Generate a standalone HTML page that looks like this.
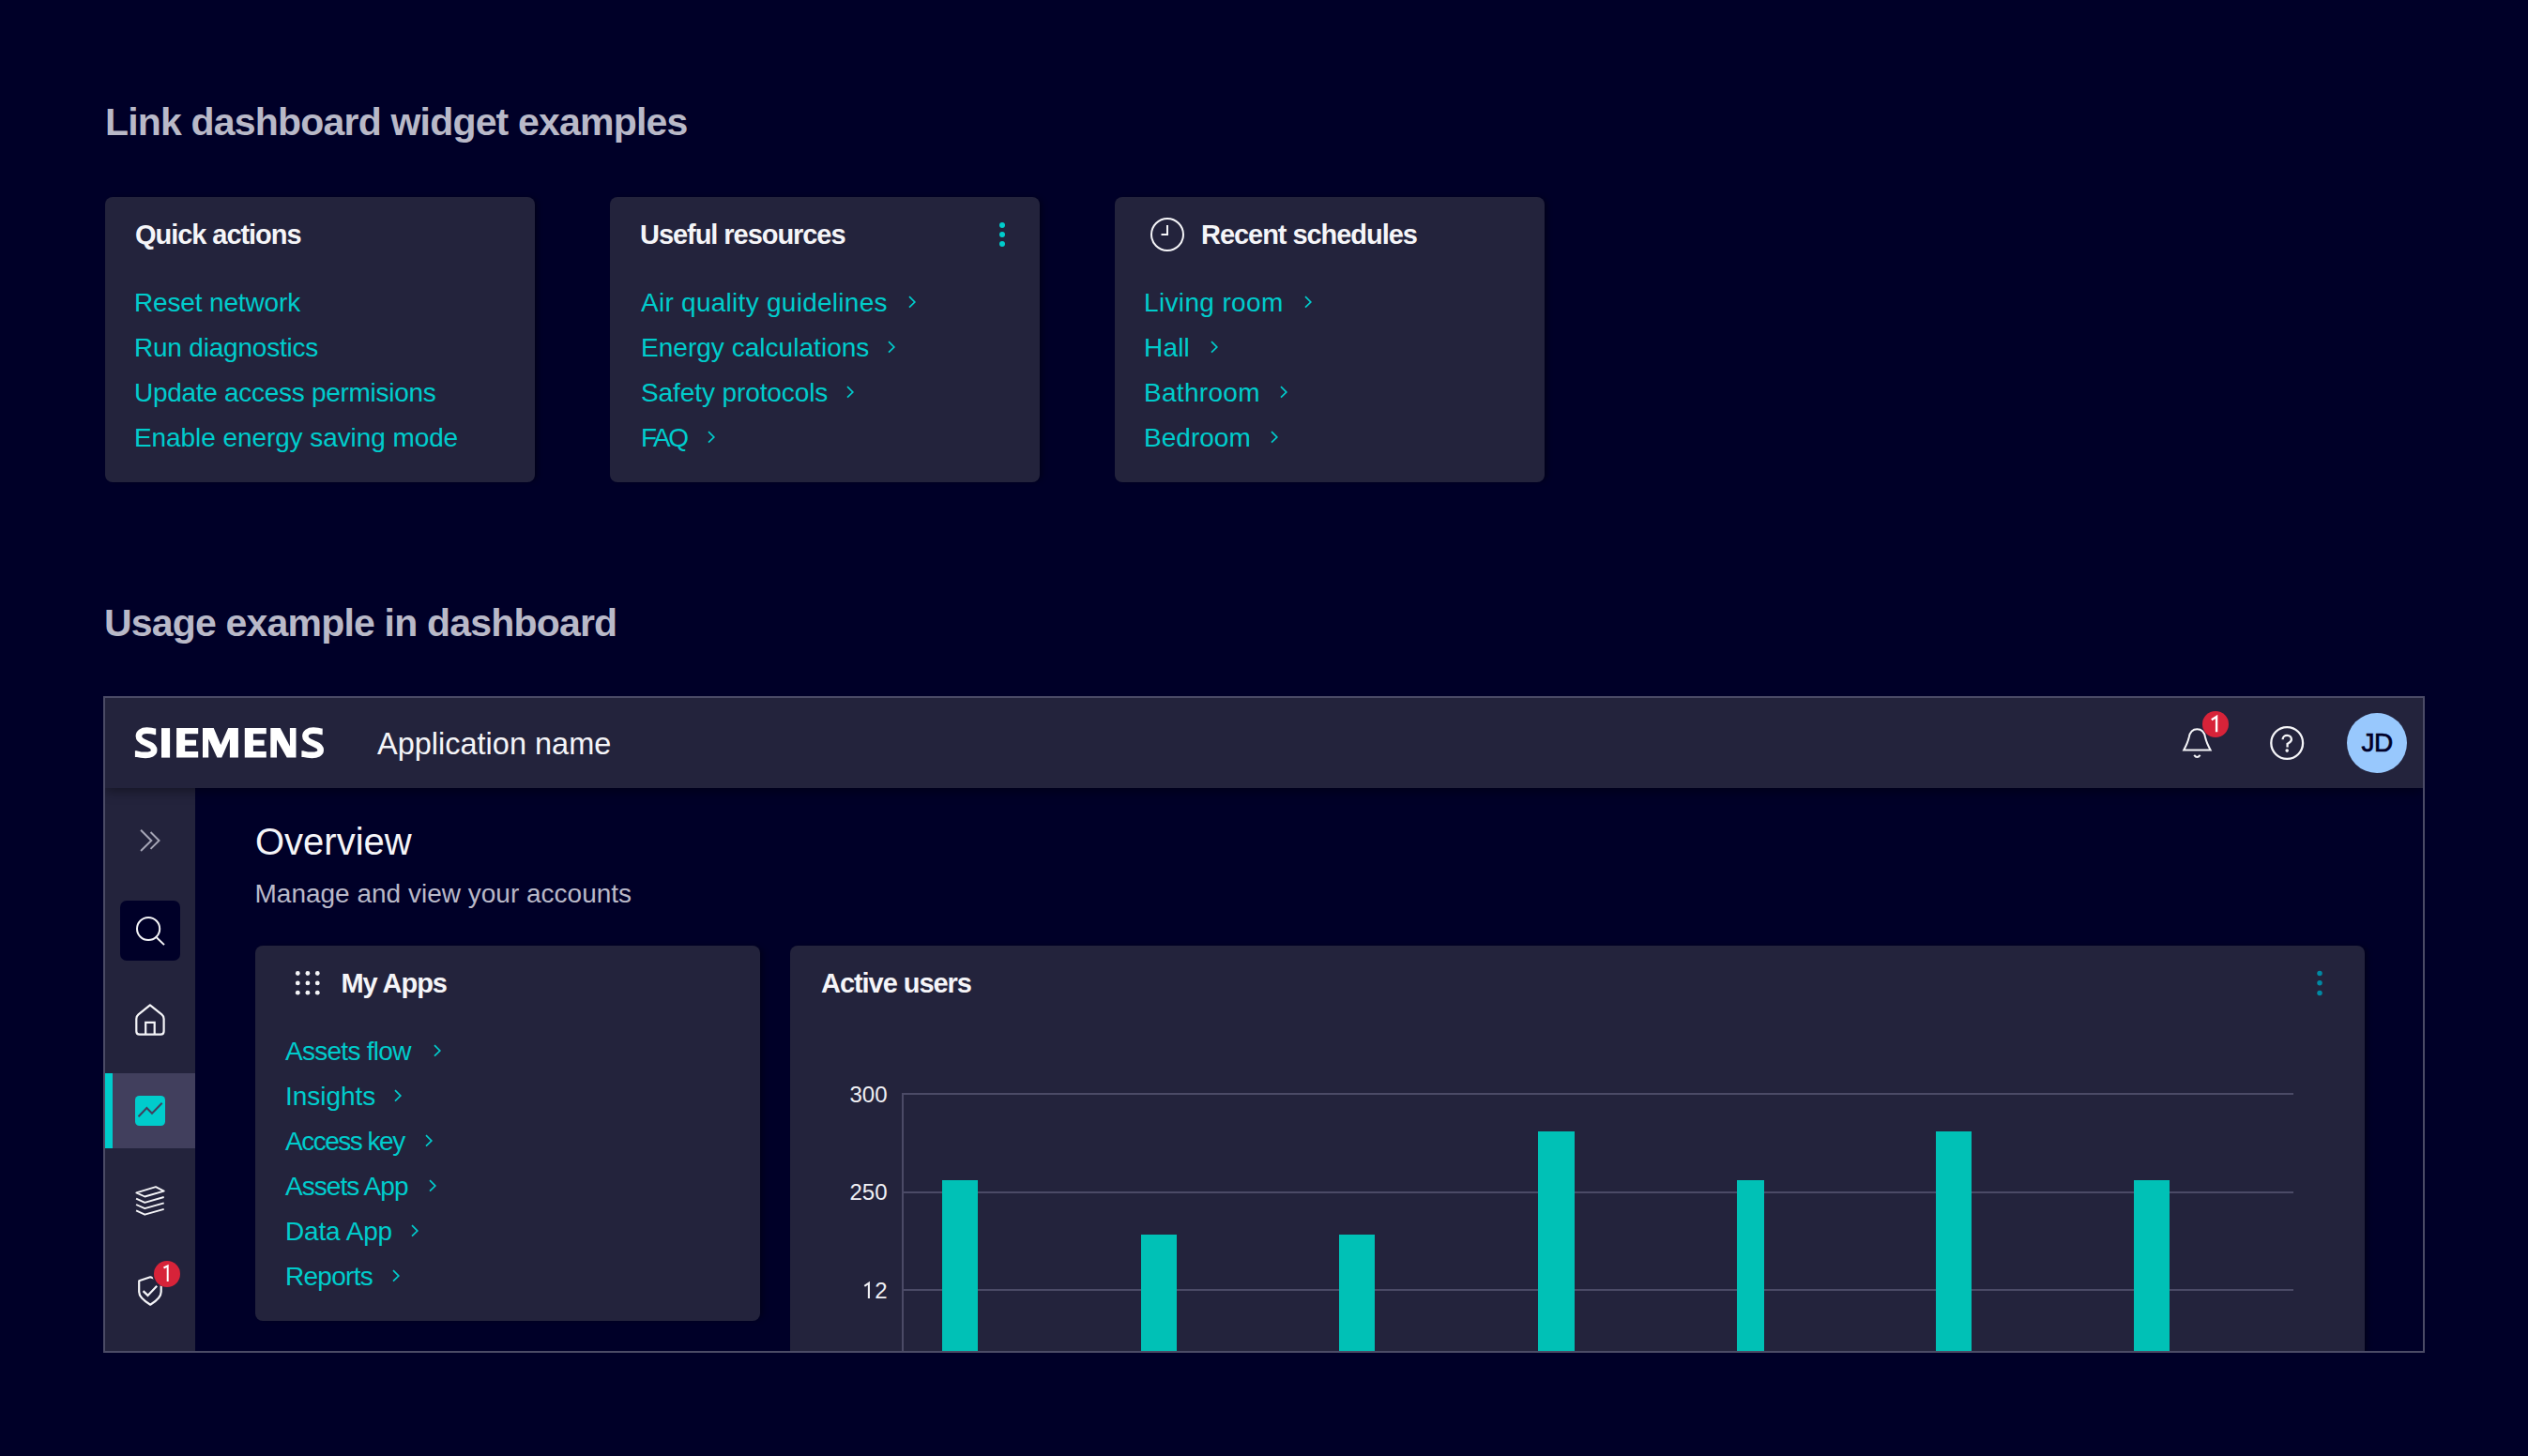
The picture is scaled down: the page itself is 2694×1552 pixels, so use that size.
<!DOCTYPE html>
<html>
<head>
<meta charset="utf-8">
<style>
html,body{margin:0;padding:0;}
body{width:2694px;height:1552px;background:#000028;position:relative;overflow:hidden;font-family:"Liberation Sans",sans-serif;}
.abs{position:absolute;white-space:nowrap;}
.sec{font-size:41px;line-height:41px;font-weight:700;color:#b9b9c8;letter-spacing:-0.81px;}
.card{position:absolute;background:#23233c;border-radius:8px;box-shadow:4px 0 6px -2px rgba(0,0,0,0.45);}
.ct{position:absolute;font-size:29px;line-height:29px;font-weight:700;color:#f5f5f8;letter-spacing:-1.05px;white-space:nowrap;}
.links{position:absolute;font-size:28px;line-height:48px;color:#00cccc;letter-spacing:-0.15px;white-space:nowrap;}
.links div{height:48px;}
.links div{position:relative;}
.chv{position:absolute;top:16.1px;}
</style>
</head>
<body>

<!-- Section 1 -->
<div class="abs sec" style="left:112px;top:110px;">Link dashboard widget examples</div>

<div class="card" style="left:112px;top:210px;width:458px;height:304px;">
  <div class="ct" style="left:32px;top:26px;">Quick actions</div>
  <div class="links" style="left:31px;top:89px;">
    <div>Reset network</div>
    <div style="letter-spacing:-0.21px">Run diagnostics</div>
    <div style="letter-spacing:-0.29px">Update access permisions</div>
    <div style="letter-spacing:-0.08px">Enable energy saving mode</div>
  </div>
</div>

<div class="card" style="left:650px;top:210px;width:458px;height:304px;">
  <div class="ct" style="left:32px;top:26px;">Useful resources</div>
  <svg class="abs" style="left:412px;top:24px;" width="12" height="32" viewBox="0 0 12 32">
    <circle cx="6" cy="6" r="3" fill="#00cccc"/><circle cx="6" cy="16" r="3" fill="#00cccc"/><circle cx="6" cy="26" r="3" fill="#00cccc"/>
  </svg>
  <div class="links" style="left:33px;top:89px;">
    <div style="letter-spacing:0.27px">Air quality guidelines<svg class="chv" style="left:285.0px;" width="10" height="16" viewBox="0 0 10 16"><polyline points="1,1.2 6.8,7 1,12.7" fill="none" stroke="#00cccc" stroke-width="1.7"/></svg></div>
    <div style="letter-spacing:0.03px">Energy calculations<svg class="chv" style="left:262.5px;" width="10" height="16" viewBox="0 0 10 16"><polyline points="1,1.2 6.8,7 1,12.7" fill="none" stroke="#00cccc" stroke-width="1.7"/></svg></div>
    <div style="letter-spacing:-0.10px">Safety protocols<svg class="chv" style="left:218.5px;" width="10" height="16" viewBox="0 0 10 16"><polyline points="1,1.2 6.8,7 1,12.7" fill="none" stroke="#00cccc" stroke-width="1.7"/></svg></div>
    <div style="letter-spacing:-2.45px">FAQ<svg class="chv" style="left:70.6px;" width="10" height="16" viewBox="0 0 10 16"><polyline points="1,1.2 6.8,7 1,12.7" fill="none" stroke="#00cccc" stroke-width="1.7"/></svg></div>
  </div>
</div>

<div class="card" style="left:1188px;top:210px;width:458px;height:304px;">
  <svg class="abs" style="left:36px;top:20px;" width="40" height="40" viewBox="0 0 40 40">
    <circle cx="20" cy="20" r="17" fill="none" stroke="#f5f5f8" stroke-width="2"/>
    <polyline points="13.5,20 20,20 20,10" fill="none" stroke="#f5f5f8" stroke-width="2"/>
  </svg>
  <div class="ct" style="left:92px;top:26px;">Recent schedules</div>
  <div class="links" style="left:31px;top:89px;">
    <div style="letter-spacing:0.35px">Living room<svg class="chv" style="left:171.0px;" width="10" height="16" viewBox="0 0 10 16"><polyline points="1,1.2 6.8,7 1,12.7" fill="none" stroke="#00cccc" stroke-width="1.7"/></svg></div>
    <div style="letter-spacing:0.18px">Hall<svg class="chv" style="left:71.0px;" width="10" height="16" viewBox="0 0 10 16"><polyline points="1,1.2 6.8,7 1,12.7" fill="none" stroke="#00cccc" stroke-width="1.7"/></svg></div>
    <div style="letter-spacing:0.31px">Bathroom<svg class="chv" style="left:145.0px;" width="10" height="16" viewBox="0 0 10 16"><polyline points="1,1.2 6.8,7 1,12.7" fill="none" stroke="#00cccc" stroke-width="1.7"/></svg></div>
    <div style="letter-spacing:0.02px">Bedroom<svg class="chv" style="left:135.0px;" width="10" height="16" viewBox="0 0 10 16"><polyline points="1,1.2 6.8,7 1,12.7" fill="none" stroke="#00cccc" stroke-width="1.7"/></svg></div>
  </div>
</div>

<!-- Section 2 -->
<div class="abs sec" style="left:111px;top:644px;">Usage example in dashboard</div>

<!-- FRAME -->
<div id="frame" style="position:absolute;left:110px;top:742px;width:2474px;height:700px;box-sizing:border-box;border:2px solid #4b4b66;overflow:hidden;background:#000028;">
  <!-- header -->
  <div style="position:absolute;left:0;top:0;width:2470px;height:96px;background:#23233c;z-index:5;box-shadow:0 3px 12px rgba(0,0,0,0.4);">
    <svg class="abs" style="left:30px;top:30px;" width="220" height="36" viewBox="142 774 220 36">
      <g fill="#fff">
        <path d="M166.2,779.9 L165,779.9 C162,778.8 159.5,778.6 156.5,778.6 C151,778.6 147.9,781.3 147.9,784.8 C147.9,788.6 151.5,790.3 155,791.8 L158.5,793.4 C162,794.9 164.2,796.8 164.2,799.6 C164.2,803.2 160.3,804.9 155,804.9 C151.5,804.9 148.5,804.4 145.5,803.6 L143.9,803.6" fill="none" stroke="#fff" stroke-width="6.6"/>
        <rect x="172" y="776.1" width="9.1" height="31.5"/>
        <path d="M188.1,776.1 H211.2 V782.3 H197.2 V788.8 H209 V794.7 H197.2 V801 H211.2 V807.6 H188.1 Z"/>
        <path d="M216,807.6 L216,776.1 L227.7,776.1 L235.2,794 L243.2,776.1 L253.9,776.1 L253.9,807.6 L244.9,807.6 L244.9,787.6 L236.3,807.6 L231.4,807.6 L222.2,787.6 L222.2,807.6 Z"/>
        <path d="M260.8,776.1 H283.8 V782.3 H269.9 V788.8 H281.6 V794.7 H269.9 V801 H283.8 V807.6 H260.8 Z"/>
        <path d="M288.3,807.6 L288.3,776.1 L298.7,776.1 L308.9,795.6 L308.9,776.1 L315.5,776.1 L315.5,807.6 L305.7,807.6 L295,788.4 L295,807.6 Z"/>
        <path d="M 343.7,779.9 L 342.5,779.9 C 339.5,778.8 337.0,778.6 334.0,778.6 C 328.5,778.6 325.4,781.3 325.4,784.8 C 325.4,788.6 329.0,790.3 332.5,791.8 L 336.0,793.4 C 339.5,794.9 341.7,796.8 341.7,799.6 C 341.7,803.2 337.8,804.9 332.5,804.9 C 329.0,804.9 326.0,804.4 323.0,803.6 L 321.4,803.6" fill="none" stroke="#fff" stroke-width="6.6"/>
      </g>
    </svg>
    <div class="abs" style="left:290px;top:33px;font-size:32.5px;line-height:32px;color:#f5f5f8;">Application name</div>
    <!-- bell -->
    <svg class="abs" style="left:2210px;top:28px;" width="40" height="44" viewBox="2322 772 40 44">
      <path d="M2327.2,799.5 C2330.4,793.5 2331.9,789.5 2332.7,786 C2333.6,780.8 2336.6,777.2 2341.4,777.2 C2346.2,777.2 2349.2,780.8 2350.1,786 C2350.9,789.5 2352.4,793.5 2355.6,799.5 Z" fill="none" stroke="#f5f5f8" stroke-width="2" stroke-linejoin="miter"/>
      <path d="M2338.2,804.9 Q2341.4,809.2 2344.6,804.9" fill="none" stroke="#f5f5f8" stroke-width="2"/>
    </svg>
    <svg class="abs" style="left:2235px;top:14px;" width="28" height="28" viewBox="2347 758 28 28">
      <circle cx="2361" cy="772" r="14" fill="#d72339"/>
      <polyline points="2356.8,767.2 2362.1,764 2362.1,780.2" fill="none" stroke="#fff" stroke-width="2.4" stroke-linejoin="miter"/>
    </svg>
    <!-- help -->
    <svg class="abs" style="left:2305px;top:28px;" width="40" height="40" viewBox="2417 772 40 40">
      <circle cx="2437.2" cy="792" r="16.9" fill="none" stroke="#f5f5f8" stroke-width="2.3"/>
      <path d="M2432.6,788.2 C2432.6,785.5 2434.8,783.9 2437.3,783.9 C2440,783.9 2441.9,785.8 2441.9,788.2 C2441.9,790.6 2440,791.4 2437.6,792.8 L2437.6,796.5" fill="none" stroke="#f5f5f8" stroke-width="2.3"/>
      <circle cx="2437.2" cy="800.1" r="1.8" fill="#f5f5f8"/>
    </svg>
    <!-- avatar -->
    <div class="abs" style="left:2389px;top:16px;width:64px;height:64px;border-radius:50%;background:#98c8fd;color:#000028;font-size:28px;line-height:64px;text-align:center;-webkit-text-stroke:0.7px #000028;letter-spacing:-0.5px;">JD</div>
  </div>
  <!-- sidebar -->
  <div style="position:absolute;left:0;top:96px;width:96px;height:620px;background:#23233c;">
  </div>
  <!-- sidebar icons (page coords offset: -112,-744) -->
  <svg class="abs" style="left:26px;top:128px;" width="44" height="44" viewBox="138 872 44 44">
    <polyline points="150.05,884.8 161.3,896 150.05,907" fill="none" stroke="#a5a5b6" stroke-width="2"/>
    <polyline points="160.5,887 169.5,896 160.5,904.9" fill="none" stroke="#a5a5b6" stroke-width="2"/>
  </svg>
  <div class="abs" style="left:16px;top:216px;width:64px;height:64px;border-radius:7px;background:#000028;"></div>
  <svg class="abs" style="left:26px;top:222px;" width="44" height="52" viewBox="138 966 44 52">
    <circle cx="158.1" cy="990" r="12.1" fill="none" stroke="#f5f5f8" stroke-width="2"/>
    <line x1="166.8" y1="999.2" x2="175" y2="1007.1" stroke="#f5f5f8" stroke-width="2"/>
  </svg>
  <svg class="abs" style="left:26px;top:320px;" width="44" height="44" viewBox="138 1064 44 44">
    <path d="M159.9,1071.3 L172.4,1081.4 Q174.6,1083.2 174.6,1086 L174.6,1099.2 Q174.6,1102.7 171.1,1102.7 L148.8,1102.7 Q145.3,1102.7 145.3,1099.2 L145.3,1086 Q145.3,1083.2 147.5,1081.4 Z" fill="none" stroke="#f5f5f8" stroke-width="2.2" stroke-linejoin="round"/>
    <polyline points="155.2,1102.7 155.2,1089.8 164.7,1089.8 164.7,1102.7" fill="none" stroke="#f5f5f8" stroke-width="2.2"/>
  </svg>
  <div class="abs" style="left:0;top:400px;width:96px;height:80px;background:#413f5d;"></div>
  <div class="abs" style="left:0;top:400px;width:8px;height:80px;background:#00cccc;"></div>
  <svg class="abs" style="left:32px;top:424px;" width="32" height="32" viewBox="144 1168 32 32">
    <rect x="144" y="1168" width="32" height="32" rx="4.5" fill="#00cccc"/>
    <polyline points="147.5,1190.2 156.4,1181 162,1186.8 172.7,1175.7" fill="none" stroke="#413f5d" stroke-width="2"/>
  </svg>
  <svg class="abs" style="left:26px;top:514px;" width="44" height="44" viewBox="138 1258 44 44">
    <polygon points="145.4,1271.3 166,1265.1 174.7,1269.6 154.3,1275.5" fill="none" stroke="#f5f5f8" stroke-width="1.9" stroke-linejoin="round"/>
    <polyline points="145.1,1277.6 154.3,1281.9 174.7,1276" fill="none" stroke="#f5f5f8" stroke-width="1.9" stroke-linejoin="round"/>
    <polyline points="145.1,1284 154.3,1288.2 174.7,1282.3" fill="none" stroke="#f5f5f8" stroke-width="1.9" stroke-linejoin="round"/>
    <polyline points="145.1,1290.3 154.3,1294.7 174.7,1288.8" fill="none" stroke="#f5f5f8" stroke-width="1.9" stroke-linejoin="round"/>
  </svg>
  <svg class="abs" style="left:26px;top:608px;" width="44" height="48" viewBox="138 1352 44 48">
    <path d="M160.2,1361.3 L148.2,1365.2 L148.2,1377.1 C148.2,1382 153,1386.5 160.2,1390.7 C167.4,1386.5 171.7,1382 171.7,1377.1 L171.7,1365.2 Z" fill="none" stroke="#f5f5f8" stroke-width="2.2" stroke-linejoin="round"/>
    <polyline points="152.6,1376.1 157.5,1380.9 167.2,1370.8" fill="none" stroke="#f5f5f8" stroke-width="2.2"/>
  </svg>
  <div class="abs" style="left:50px;top:598px;width:30px;height:30px;border-radius:50%;background:#23233c;"></div>
  <div class="abs" style="left:52px;top:600px;width:28px;height:28px;border-radius:50%;background:#d72339;"></div>
  <svg class="abs" style="left:52px;top:600px;" width="28" height="28" viewBox="164 1344 28 28">
    <polyline points="174.5,1351.5 178.7,1349.3 178.7,1366" fill="none" stroke="#fff" stroke-width="2"/>
  </svg>
  <!-- content -->
  <div class="abs" style="left:160px;top:133px;font-size:40px;line-height:40px;color:#f5f5f8;">Overview</div>
  <div class="abs" style="left:159.5px;top:195px;font-size:28px;line-height:28px;color:#b9b9c8;">Manage and view your accounts</div>

  <div class="card" style="left:160px;top:264px;width:538px;height:400px;">
    <svg class="abs" style="left:40px;top:24px;" width="32" height="32" viewBox="312 1032 32 32">
      <g fill="#f5f5f8">
        <circle cx="317.3" cy="1037.5" r="2.4"/><circle cx="327.9" cy="1037.5" r="2.4"/><circle cx="338.3" cy="1037.5" r="2.4"/>
        <circle cx="317.3" cy="1047.9" r="2.4"/><circle cx="327.9" cy="1047.9" r="2.4"/><circle cx="338.3" cy="1047.9" r="2.4"/>
        <circle cx="317.3" cy="1058.2" r="2.4"/><circle cx="327.9" cy="1058.2" r="2.4"/><circle cx="338.3" cy="1058.2" r="2.4"/>
      </g>
    </svg>
    <div class="ct" style="left:91.5px;top:26px;">My Apps</div>
    <div class="links" style="left:32px;top:89px;">
      <div style="letter-spacing:-0.72px">Assets flow<svg class="chv" style="left:157.7px;" width="10" height="16" viewBox="0 0 10 16"><polyline points="1,1.2 6.8,7 1,12.7" fill="none" stroke="#00cccc" stroke-width="1.7"/></svg></div>
      <div style="letter-spacing:-0.02px">Insights<svg class="chv" style="left:115.5px;" width="10" height="16" viewBox="0 0 10 16"><polyline points="1,1.2 6.8,7 1,12.7" fill="none" stroke="#00cccc" stroke-width="1.7"/></svg></div>
      <div style="letter-spacing:-1.49px">Access key<svg class="chv" style="left:149.4px;" width="10" height="16" viewBox="0 0 10 16"><polyline points="1,1.2 6.8,7 1,12.7" fill="none" stroke="#00cccc" stroke-width="1.7"/></svg></div>
      <div style="letter-spacing:-0.95px">Assets App<svg class="chv" style="left:153.3px;" width="10" height="16" viewBox="0 0 10 16"><polyline points="1,1.2 6.8,7 1,12.7" fill="none" stroke="#00cccc" stroke-width="1.7"/></svg></div>
      <div>Data App<svg class="chv" style="left:133.8px;" width="10" height="16" viewBox="0 0 10 16"><polyline points="1,1.2 6.8,7 1,12.7" fill="none" stroke="#00cccc" stroke-width="1.7"/></svg></div>
      <div style="letter-spacing:-0.72px">Reports<svg class="chv" style="left:114.0px;" width="10" height="16" viewBox="0 0 10 16"><polyline points="1,1.2 6.8,7 1,12.7" fill="none" stroke="#00cccc" stroke-width="1.7"/></svg></div>
    </div>
  </div>

  <div class="card" style="left:730px;top:264px;width:1678px;height:500px;">
    <div class="ct" style="left:33px;top:25.5px;">Active users</div>
    <svg class="abs" style="left:1624px;top:24px;" width="12" height="32" viewBox="0 0 12 32">
      <circle cx="6" cy="5.5" r="2.75" fill="#0089a3"/><circle cx="6" cy="15.8" r="2.75" fill="#0089a3"/><circle cx="6" cy="26.4" r="2.75" fill="#0089a3"/>
    </svg>
  </div>
  <svg class="abs" style="left:730px;top:356px;" width="1678" height="342" viewBox="842 1100 1678 342">
    <g stroke="#4b4a66" stroke-width="2">
      <line x1="962" y1="1166" x2="2444" y2="1166"/>
      <line x1="962" y1="1271" x2="2444" y2="1271"/>
      <line x1="962" y1="1375" x2="2444" y2="1375"/>
      <line x1="962" y1="1165" x2="962" y2="1442"/>
    </g>
    <g fill="#00c1b6">
      <rect x="1004" y="1258" width="38" height="200"/>
      <rect x="1216" y="1316" width="38" height="200"/>
      <rect x="1427" y="1316" width="38" height="200"/>
      <rect x="1639" y="1206" width="39" height="300"/>
      <rect x="1851" y="1258" width="29" height="200"/>
      <rect x="2063" y="1206" width="38" height="300"/>
      <rect x="2274" y="1258" width="38" height="200"/>
    </g>
    <g fill="#f0f0f4" font-size="24" text-anchor="end" font-family="Liberation Sans, sans-serif">
      <text x="945.5" y="1175">300</text>
      <text x="945.5" y="1279.2">250</text>
      <text x="945.5" y="1383.5">2</text>
    </g>
    <polyline points="921.3,1370.8 925.9,1367.7 925.9,1384" fill="none" stroke="#f0f0f4" stroke-width="2.1"/>
    <g>
    </g>
  </svg>
</div>

</body>
</html>
